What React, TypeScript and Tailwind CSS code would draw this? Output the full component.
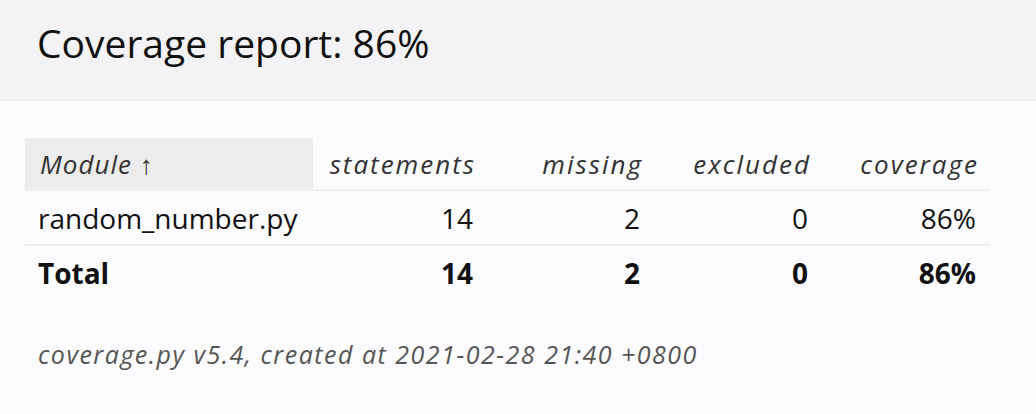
import React from "react";

const rows = [
  { name: "random_number.py", s: "14", m: "2", e: "0", c: "86%" },
];

export default function App() {
  return (
    <div
      className="w-[1036px] h-[414px] bg-[#fcfbfd] text-[#111] overflow-hidden"
      style={{ fontFamily: '"Open Sans", "Noto Sans", sans-serif' }}
    >
      <div className="h-[101px] bg-[#f3f2f4] border-b border-[#ebeaec] pl-[37px] pt-[17px]">
        <h1 className="text-[39px] leading-[52px] font-normal">Coverage report: 86%</h1>
      </div>
      <div className="pl-[25px] pt-[37px]">
        <table className="w-[965px] table-fixed border-collapse text-[28px]">
          <colgroup>
            <col className="w-[288px]" />
            <col className="w-[175px]" />
            <col className="w-[167px]" />
            <col className="w-[168px]" />
            <col className="w-[167px]" />
          </colgroup>
          <thead>
            <tr className="h-[52px] italic text-[#333] text-[26px]">
              <th className="bg-[#ececec] text-left font-normal pl-[15px] pt-[2px] tracking-[1px]">
                Module ↑
              </th>
              <th className="text-right font-normal pr-[12px] pt-[2px] tracking-[2px]">statements</th>
              <th className="text-right font-normal pr-[12px] pt-[2px] tracking-[2px]">missing</th>
              <th className="text-right font-normal pr-[12px] pt-[2px] tracking-[2px]">excluded</th>
              <th className="text-right font-normal pr-[11px] pt-[2px] tracking-[2px]">coverage</th>
            </tr>
          </thead>
          <tbody>
            {rows.map((r) => (
              <tr key={r.name} className="h-[55px] border-t-2 border-[#eeedef]">
                <td className="pl-[13px]">{r.name}</td>
                <td className="text-right pr-[15px]">{r.s}</td>
                <td className="text-right pr-[15px]">{r.m}</td>
                <td className="text-right pr-[15px]">{r.e}</td>
                <td className="text-right pr-[14px]">{r.c}</td>
              </tr>
            ))}
          </tbody>
          <tfoot>
            <tr className="h-[55px] border-t-2 border-[#eeedef] font-bold">
              <td className="pl-[13px]">Total</td>
              <td className="text-right pr-[15px]">14</td>
              <td className="text-right pr-[15px]">2</td>
              <td className="text-right pr-[15px]">0</td>
              <td className="text-right pr-[14px]">86%</td>
            </tr>
          </tfoot>
        </table>
      </div>
      <p className="pl-[38px] pt-[36px] italic text-[25px] tracking-[1.5px] text-[#555]">
        coverage.py v5.4, created at 2021-02-28 21:40 +0800
      </p>
    </div>
  );
}
